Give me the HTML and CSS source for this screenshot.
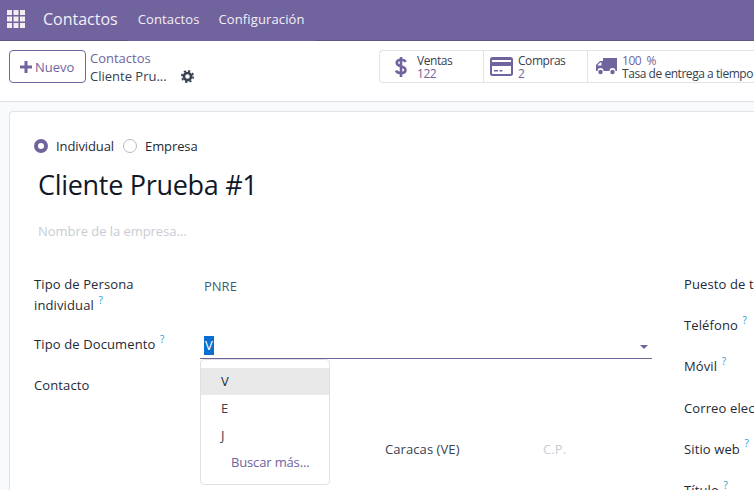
FILE: index.html
```html
<!DOCTYPE html>
<html lang="es">
<head>
<meta charset="utf-8">
<title>Contactos</title>
<link rel="stylesheet" href="styles.css">
</head>
<body>
<header class="navbar">
  <svg class="apps" viewBox="0 0 18 18" width="18" height="18"><path fill="#f4edf0" d="M0 0h5v5H0zM6.500 0h5v5h-5zM13 0h5v5h-5zM0 6.500h5v5H0zM6.500 6.500h5v5h-5zM13 6.500h5v5h-5zM0 13h5v5H0zM6.500 13h5v5h-5zM13 13h5v5h-5z"/></svg>
  <span class="brand">Contactos</span>
  <nav class="menu"><span>Contactos</span><span>Configuración</span></nav>
</header>
<section class="panel">
  <button class="new"><svg viewBox="0 0 12 12" width="12" height="12"><path fill="#71639e" d="M4.500 0h3v4.500H12v3H7.500V12h-3V7.500H0v-3h4.500z"/></svg>Nuevo</button>
  <div class="crumbs">
    <span class="crumb-link">Contactos</span>
    <div class="crumb-row"><span>Cliente Pru...</span>
      <svg class="gear" viewBox="0 0 12 12" width="13" height="13"><circle cx="6" cy="6" r="3.300" fill="none" stroke="#374151" stroke-width="2.400"/><circle cx="6" cy="6" r="5.200" fill="none" stroke="#374151" stroke-width="1.600" stroke-dasharray="2 2.080"/></svg>
    </div>
  </div>
  <div class="stats">
    <div class="stat stat-a">
      <svg viewBox="0 0 12 22" width="12" height="22"><path fill="none" stroke="#71639e" stroke-width="2.600" d="M10.600 6C10 4.500 8.500 3.800 6 3.800 3.300 3.800 1.700 5 1.700 6.800c0 4.600 8.800 2.400 8.800 7.300 0 2-1.800 3.100-4.500 3.100-2.700 0-4.300-1-5-2.600M6 1v20"/></svg>
      <div class="stat-text"><span class="muted">Ventas</span><span class="accent">122</span></div>
    </div>
    <div class="stat stat-b">
      <svg viewBox="0 0 23 19" width="23" height="19"><path fill="#71639e" d="M2.500 0h18A2.500 2.500 0 0 1 23 2.500v14a2.500 2.500 0 0 1-2.500 2.500h-18A2.500 2.500 0 0 1 0 16.500v-14A2.500 2.500 0 0 1 2.500 0zM2 3v2h19V3zm0 6v7.500c0 .3.200.5.500.5h18c.3 0 .5-.2.500-.5V9zm2 4h4v1.500H4zm5.500 0h3v1.500h-3z" fill-rule="evenodd"/></svg>
      <div class="stat-text"><span class="muted">Compras</span><span class="accent">2</span></div>
    </div>
    <div class="stat stat-c">
      <svg viewBox="0 0 21 17" width="21" height="17"><path fill="#71639e" d="M7 0h14v13h-1.500a3 3 0 0 0-6 0H7.500a3 3 0 0 0-6 0H0V7l4-4h3zM5.500 4.500H4.200L1.700 7v.5h3.800z" fill-rule="evenodd"/><circle cx="4.500" cy="14" r="2.200" fill="#71639e"/><circle cx="16.500" cy="14" r="2.200" fill="#71639e"/></svg>
      <div class="stat-text"><span class="accent">100 &nbsp;%</span><span class="muted">Tasa de entrega a tiempo</span></div>
    </div>
  </div>
</section>
<main class="sheet-wrap">
  <div class="sheet">
    <div class="radios">
      <span class="radio radio-on"></span><span class="radio-label">Individual</span>
      <span class="radio"></span><span class="radio-label">Empresa</span>
    </div>
    <h1 class="title">Cliente Prueba #1</h1>
    <div class="company">Nombre de la empresa...</div>
    <div class="columns">
      <div class="left">
        <div class="row row-person">
          <div class="label">Tipo de Persona individual <sup class="help">?</sup></div>
          <div class="value">PNRE</div>
        </div>
        <div class="row row-doc">
          <div class="label">Tipo de Documento <sup class="help">?</sup></div>
          <div class="combo">
            <span class="selected">V</span><span class="caret"></span>
            <ul class="dropdown">
              <li class="option option-active">V</li>
              <li class="option">E</li>
              <li class="option">J</li>
              <li class="more">Buscar más...</li>
            </ul>
          </div>
        </div>
        <div class="row row-contact"><div class="label">Contacto</div></div>
        <div class="address"><span class="city">Caracas (VE)</span><span class="zip">C.P.</span></div>
      </div>
      <div class="right">
        <div class="rlabel">Puesto de trabajo</div>
        <div class="rlabel">Teléfono <sup class="help">?</sup></div>
        <div class="rlabel">Móvil <sup class="help">?</sup></div>
        <div class="rlabel">Correo electrónico</div>
        <div class="rlabel">Sitio web <sup class="help">?</sup></div>
        <div class="rlabel">Título <sup class="help">?</sup></div>
      </div>
    </div>
  </div>
</main>
</body>
</html>
```
FILE: styles.css
```css
* { box-sizing: border-box; }
html, body { margin: 0; height: 100%; }
body {
  width: 754px; height: 490px; overflow: hidden;
  font-family: "Open Sans", "Noto Sans", sans-serif;
  font-size: 13px; color: #374151; background: #f9fafb;
}
.navbar {
  height: 41px; background: #71639e; color: #f3eff6;
  border-bottom: 1px solid #5f5387;
  display: flex; align-items: center; padding-left: 7px;
}
.apps { margin-right: 18px; margin-top: -3px; }
.brand { font-size: 16px; margin-right: 10px; padding-bottom: 2px; }
.menu { display: flex; align-items: center; gap: 19px; align-self: stretch; padding: 0 10px 2px; margin-bottom: -1px; border-bottom: 1px solid #71639e; letter-spacing: 0.12px; }
.panel {
  height: 61px; background: #fff; border-bottom: 1px solid #dee2e6;
  display: flex; align-items: flex-start; padding: 9px 0 0 9px; overflow: hidden;
}
.new {
  flex: none; width: 77px; height: 33px; margin-top: 0; border: 1px solid #71639e; border-radius: 4px;
  background: #fff; color: #71639e; font: inherit;
  display: flex; align-items: center; gap: 3px; padding: 0 0 0 10px;
}
.crumbs { flex: none; width: 289px; margin-left: 4px; margin-top: -1px; display: flex; flex-direction: column; line-height: 18px; white-space: nowrap; }
.crumb-link { color: #71639e; }
.crumb-row { display: flex; align-items: center; gap: 14px; color: #374151; }
.gear { margin-top: 1px; }
.stats { display: flex; border: 1px solid #e1e3e8; border-right: 0; border-radius: 4px 0 0 4px; height: 33px; flex: none; }
.stat { display: flex; align-items: center; height: 31px; border-right: 1px solid #e1e3e8; flex: none; }
.stat-a { width: 104px; padding-left: 15px; gap: 10px; }
.stat-b { width: 104px; padding-left: 6px; gap: 5px; }
.stat-c { width: 200px; padding-left: 8px; gap: 5px; border-right: 0; }
.stat-text { display: flex; flex-direction: column; line-height: 13px; font-size: 12px; letter-spacing: -0.45px; white-space: nowrap; }
.muted { color: #374151; }
.accent { color: #71639e; }
.sheet-wrap { padding: 9px 0 0 9px; }
.sheet {
  height: 400px; background: #fff; border: 1px solid #e1e3e8; border-right: 0; border-bottom: 0;
  border-radius: 4px 0 0 0; padding: 24px 0 0 24px; overflow: hidden;
}
.radios { display: flex; align-items: center; color: #1f2937; height: 20px; }
.radio { width: 14px; height: 14px; border-radius: 50%; border: 1px solid #b8bcc4; margin-right: 8px; background: #fff; }
.radio-on { border: 4px solid #71639e; }
.radio-label { margin-right: 9px; letter-spacing: -0.1px; }
.title { margin: 9px 0 0 4px; font-size: 27px; line-height: 40px; font-weight: 400; color: #111827; letter-spacing: -0.3px; }
.company { margin: 16px 0 0 4px; color: #c8cdd4; height: 20px; line-height: 20px; letter-spacing: -0.05px; }
.columns { display: flex; margin-top: 33px; }
.left { width: 618px; flex: none; }
.right { margin-left: 32px; white-space: nowrap; }
.rlabel { height: 41.2px; line-height: 20px; color: #1f2937; letter-spacing: 0.12px; }
.row { display: flex; }
.label { width: 170px; color: #1f2937; line-height: 21px; flex: none; letter-spacing: 0.12px; }
.row-person { height: 60px; }
.row-person .label { width: 110px; margin-right: 60px; }
.value { color: #3f5f78; padding-top: 3px; }
.row-doc { height: 41px; }
.combo { flex: 1; height: 25px; margin-left: -4px; border-bottom: 1px solid #71639e; position: relative; line-height: 18px; padding: 2px 0 0 4px; }
.selected { background: #0a6fd0; color: #fff; padding: 0 1px; display: inline-block; height: 19px; }
.caret { position: absolute; right: 4px; top: 11px; border: 4px solid transparent; border-top-color: #71639e; border-bottom: 0; }
.dropdown {
  position: absolute; left: 0; top: 25px; width: 130px; height: 126px; margin: 0; padding: 8px 0 0; list-style: none;
  background: #fff; border: 1px solid #dfe1e5; border-radius: 4px; z-index: 2;
}
.option { height: 27px; line-height: 27px; padding-left: 20px; color: #374151; }
.option-active { background: #e9e9e9; color: #1f2937; }
.more { height: 27px; line-height: 27px; padding-left: 30px; color: #71639e; letter-spacing: -0.15px; }
.row-contact { height: 54px; }
.address { padding-left: 351px; margin-top: 10px; display: flex; line-height: 20px; letter-spacing: 0.08px; }
.city { width: 158px; color: #374151; }
.zip { color: #c8cdd4; }
.help { color: #1f9bd1; font-size: 10px; line-height: 0; position: relative; top: -1px; margin-left: 1px; }
```
